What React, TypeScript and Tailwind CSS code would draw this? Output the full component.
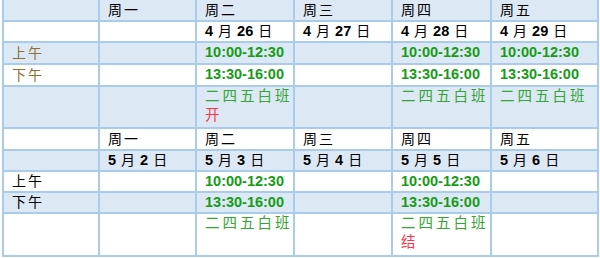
import React from "react";

const BLUE = "bg-[#dde8f5]";
const WHITE = "bg-white";

type Cell = React.ReactNode;

function DateText({ m, d }: { m: string; d: string }) {
  return (
    <span className="flex items-center">
      <b className="font-bold text-[14.5px]">{m}</b>
      <span className="mx-[5px]">月</span>
      <b className="font-bold text-[14.5px]">{d}</b>
      <span className="ml-[5px]">日</span>
    </span>
  );
}

const Time = ({ t }: { t: string }) => (
  <span className="font-bold text-[14.5px] text-[#169c16]">{t}</span>
);

const Shift = ({ extra }: { extra?: string }) => (
  <div className="flex flex-col">
    <span className="text-[#35a535] text-[14.5px] tracking-[3px]">二四五白班</span>
    {extra && <span className="text-[#ff3346] text-[14.5px]">{extra}</span>}
  </div>
);

function Row({ bg, h, cells, top }: { bg: string; h: number; cells: Cell[]; top?: boolean }) {
  return (
    <>
      {cells.map((c, i) => (
        <div
          key={i}
          className={`${bg} pl-2 text-[14px] text-black overflow-hidden whitespace-nowrap ${
            top ? "leading-[19px] pt-0" : "flex items-center"
          }`}
          style={{ height: h }}
        >
          {c}
        </div>
      ))}
    </>
  );
}

export default function App() {
  const wk = (s: string) => <span className="tracking-[2px]">{s}</span>;
  const brown = (s: string) => <span className="text-[#8f7030] tracking-[2px]">{s}</span>;
  const blk = (s: string) => <span className="tracking-[2px]">{s}</span>;
  return (
    <div className="w-[600px] h-[258px] bg-white" style={{ fontFamily: '"Liberation Sans", "Noto Sans CJK SC", sans-serif' }}>
      <div className="ml-[2px] w-[597px] bg-[#a9cbec] px-[2px] pb-[2px] grid grid-cols-[94px_95px_96px_96px_97px_105px] gap-[2px]">
        <Row bg={BLUE} h={20} cells={["", wk("周一"), wk("周二"), wk("周三"), wk("周四"), wk("周五")]} />
        <Row
          bg={WHITE}
          h={19}
          cells={["", "", <DateText m="4" d="26" />, <DateText m="4" d="27" />, <DateText m="4" d="28" />, <DateText m="4" d="29" />]}
        />
        <Row bg={BLUE} h={20} cells={[brown("上午"), "", <Time t="10:00-12:30" />, "", <Time t="10:00-12:30" />, <Time t="10:00-12:30" />]} />
        <Row bg={WHITE} h={20} cells={[brown("下午"), "", <Time t="13:30-16:00" />, "", <Time t="13:30-16:00" />, <Time t="13:30-16:00" />]} />
        <Row bg={BLUE} h={40} top cells={["", "", <Shift extra="开" />, "", <Shift />, <Shift />]} />
        <Row bg={WHITE} h={20} cells={["", wk("周一"), wk("周二"), wk("周三"), wk("周四"), wk("周五")]} />
        <Row
          bg={BLUE}
          h={19}
          cells={["", <DateText m="5" d="2" />, <DateText m="5" d="3" />, <DateText m="5" d="4" />, <DateText m="5" d="5" />, <DateText m="5" d="6" />]}
        />
        <Row bg={WHITE} h={19} cells={[blk("上午"), "", <Time t="10:00-12:30" />, "", <Time t="10:00-12:30" />, ""]} />
        <Row bg={BLUE} h={19} cells={[blk("下午"), "", <Time t="13:30-16:00" />, "", <Time t="13:30-16:00" />, ""]} />
        <Row bg={WHITE} h={41} top cells={["", "", <Shift />, "", <Shift extra="结" />, ""]} />
      </div>
    </div>
  );
}
